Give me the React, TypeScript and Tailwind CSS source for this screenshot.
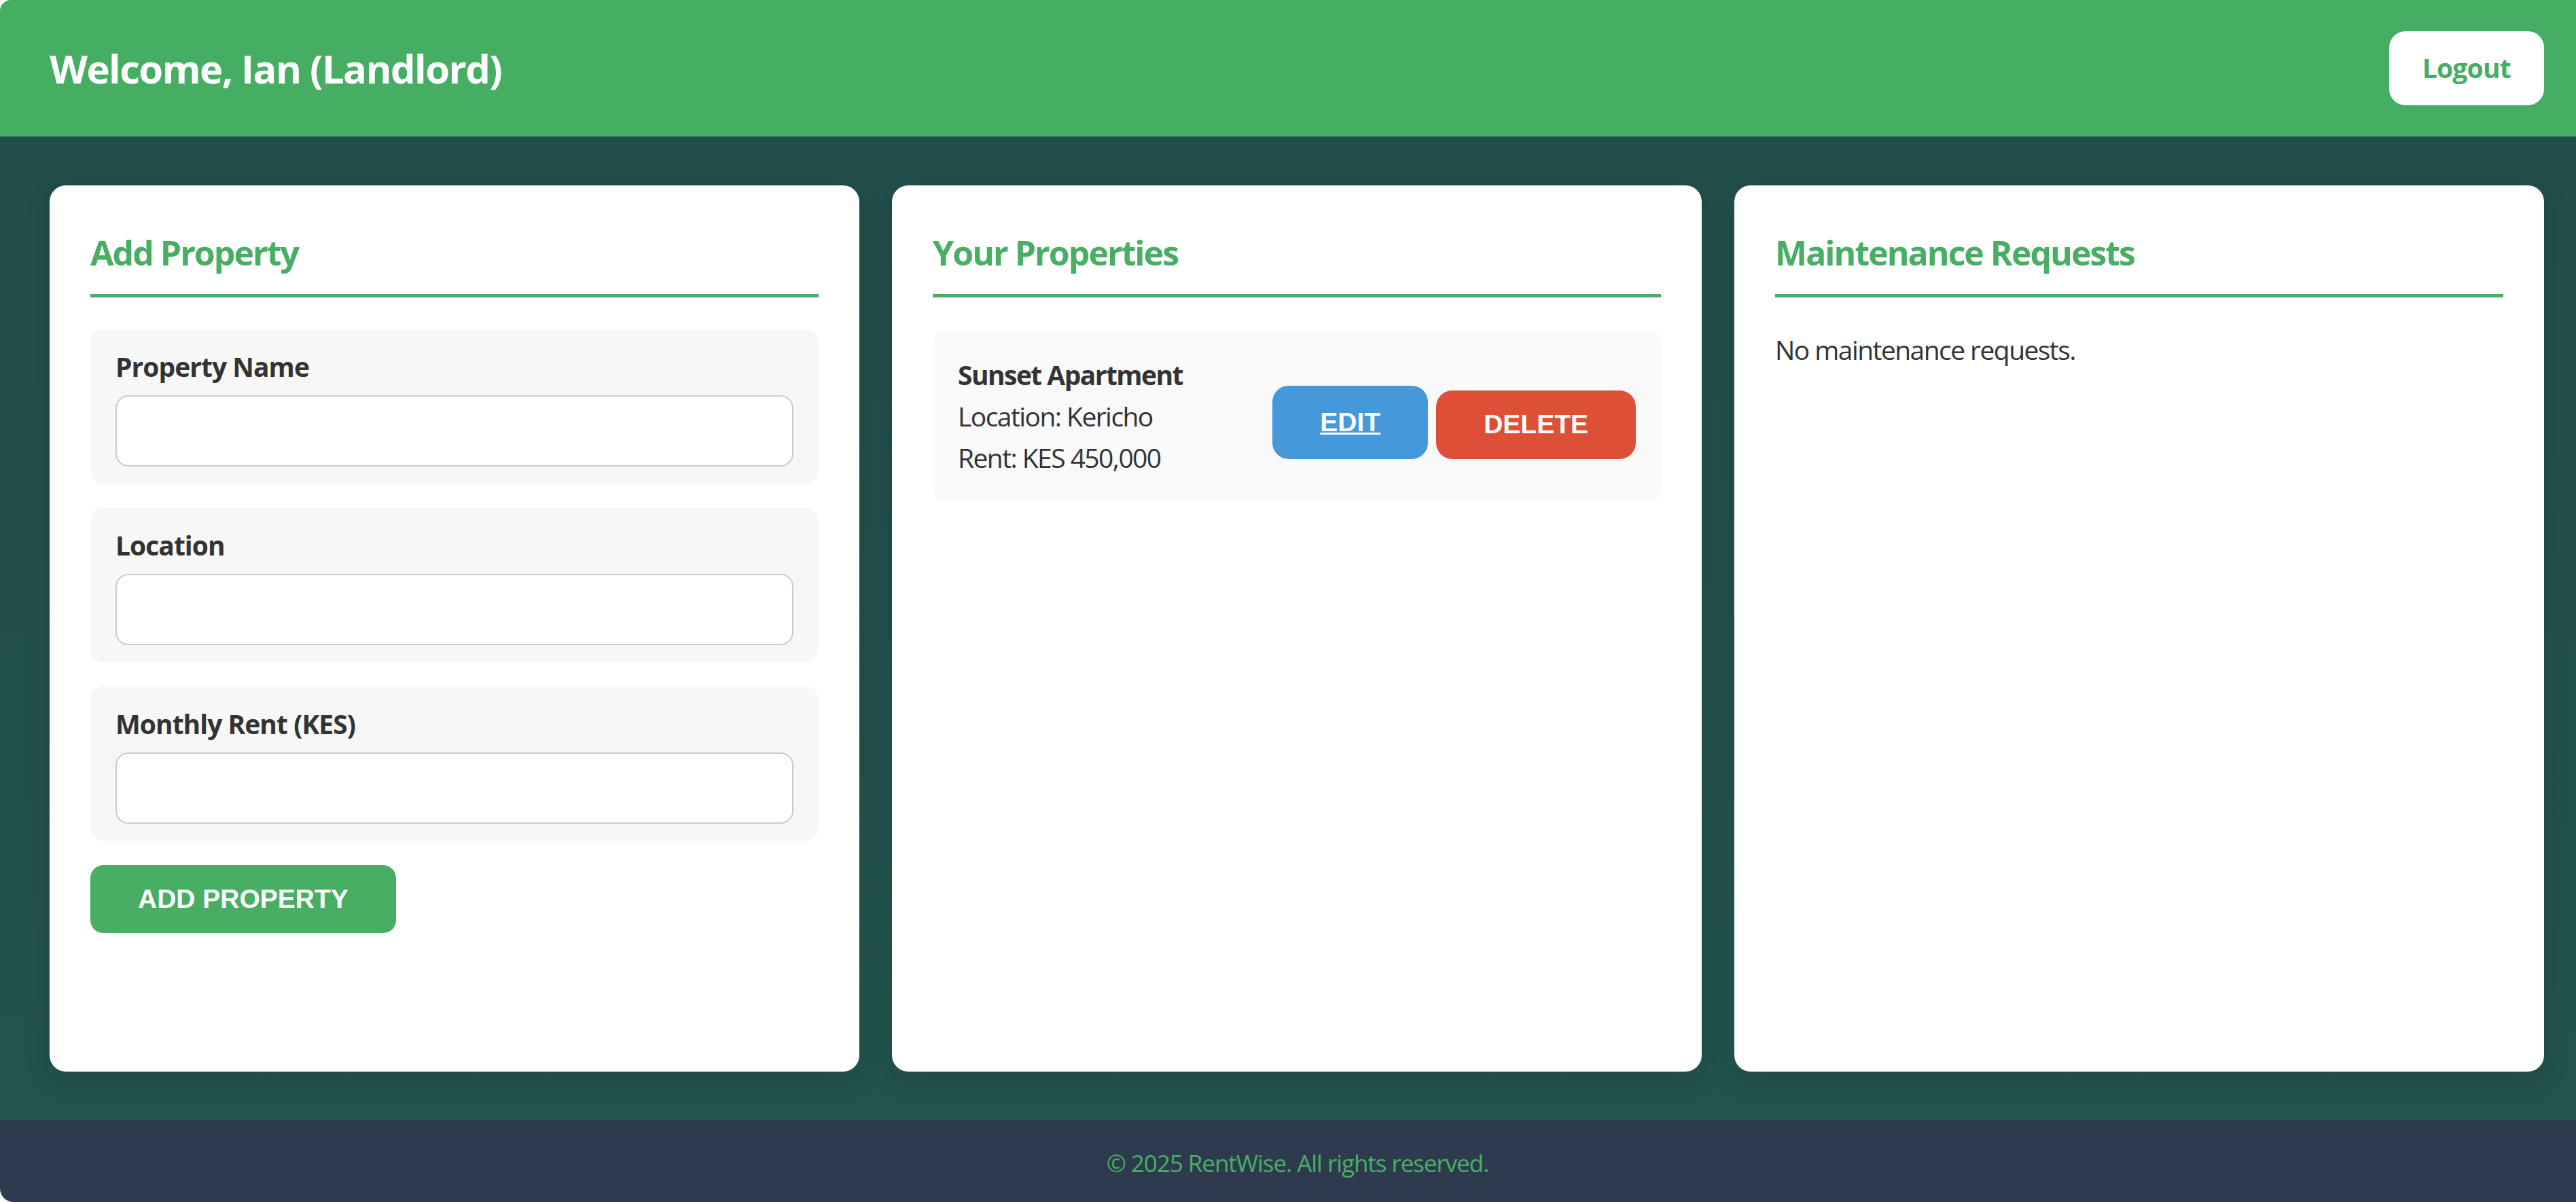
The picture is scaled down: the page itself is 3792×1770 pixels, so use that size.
import React from "react";

// Landlord dashboard: add property form, property list, maintenance requests
const sans = "font-['Segoe_UI','Open_Sans',sans-serif]";
const arial = "font-['Liberation_Sans',Arial,sans-serif] tracking-normal";

const Card = ({ title, children }: { title: string; children?: React.ReactNode }) => (
  <section className="bg-white rounded-[24px] px-[60px] pt-[60px] shadow-[0_12px_40px_rgba(0,0,0,0.12)]">
    <h2 className="text-[50px] leading-[79px] tracking-[-0.04em] font-bold text-[#47ae63] pb-[21px] border-b-[5px] border-[#47ae63] mb-[47px]">
      {title}
    </h2>
    {children}
  </section>
);

const Field = ({ label }: { label: string }) => (
  <div className="bg-[#f7f7f7] rounded-[19px] px-[37px] pt-[31px] pb-[25px]">
    <label className="block text-[39px] leading-[48px] tracking-[-0.025em] font-bold text-[#333] mb-[18px]">
      {label}
    </label>
    <input
      type="text"
      className="block w-full h-[105px] bg-white border-2 border-[#cccccc] rounded-[19px] px-[24px] text-[39px] outline-none"
    />
  </div>
);

export default function App() {
  return (
    <div className={`${sans} h-screen flex flex-col rounded-tl-[16px] rounded-bl-[20px] overflow-hidden`}>
      <header className="h-[201px] shrink-0 bg-[#46ae63] flex items-center justify-between pl-[73px] pr-[47px]">
        <h1 className="text-[58px] tracking-[-0.028em] font-bold text-white">Welcome, Ian (Landlord)</h1>
        <button className="h-[109px] px-[49px] bg-white rounded-[24px] text-[39px] tracking-[-0.02em] font-bold text-[#46ae63]">
          Logout
        </button>
      </header>

      <main className="flex-1 grid grid-cols-3 gap-x-[48px] pt-[72px] pb-[72px] pl-[73px] pr-[47px] bg-linear-to-b from-[#204e4a] to-[#23534e]">
        <Card title="Add Property">
          <form className="flex flex-col gap-[36px]">
            <Field label="Property Name" />
            <Field label="Location" />
            <Field label="Monthly Rent (KES)" />
            <button
              type="button"
              className={`${arial} self-start h-[100px] px-[70px] bg-[#47ae63] rounded-[19px] text-[39px] font-bold text-white`}
            >
              ADD PROPERTY
            </button>
          </form>
        </Card>

        <Card title="Your Properties">
          <div className="bg-[#f9f9f9] rounded-[19px] px-[37px] py-[36px] flex items-center justify-between">
            <div className="text-[39px] leading-[61px] tracking-[-0.04em] text-[#333]">
              <p className="font-bold">Sunset Apartment</p>
              <p>Location: Kericho</p>
              <p>Rent: KES 450,000</p>
            </div>
            <div className="flex items-end gap-[12px] mt-[19px]">
              <a
                href="#"
                className={`${arial} h-[108px] px-[70px] flex items-center bg-[#4599db] rounded-[24px] text-[39px] font-bold text-white underline`}
              >
                EDIT
              </a>
              <button
                className={`${arial} h-[101px] px-[70px] bg-[#de4f38] rounded-[24px] text-[39px] font-bold text-white`}
              >
                DELETE
              </button>
            </div>
          </div>
        </Card>

        <Card title="Maintenance Requests">
          <p className="text-[39px] leading-[60px] tracking-[-0.04em] text-[#333]">No maintenance requests.</p>
        </Card>
      </main>

      <footer className="h-[120px] shrink-0 bg-[#2e3b4f] flex items-center justify-center pt-[7px] pl-[28px]">
        <p className="text-[35px] tracking-[-0.03em] text-[#48b064]">© 2025 RentWise. All rights reserved.</p>
      </footer>
    </div>
  );
}
